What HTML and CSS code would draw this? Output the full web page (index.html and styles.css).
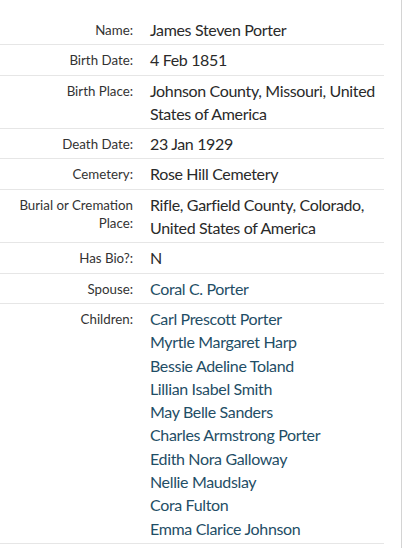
FILE: index.html
```html
<!DOCTYPE html>
<html>
<head>
<meta charset="utf-8">
<link rel="stylesheet" href="styles.css">
</head>
<body>
<div class="page">
  <dl class="facts">
    <div class="row"><dt>Name:</dt><dd>James Steven Porter</dd></div>
    <div class="row"><dt>Birth Date:</dt><dd>4 Feb 1851</dd></div>
    <div class="row"><dt>Birth Place:</dt><dd>Johnson County, Missouri, United States of America</dd></div>
    <div class="row"><dt>Death Date:</dt><dd>23 Jan 1929</dd></div>
    <div class="row"><dt>Cemetery:</dt><dd>Rose Hill Cemetery</dd></div>
    <div class="row"><dt>Burial or Cremation Place:</dt><dd>Rifle, Garfield County, Colorado, United States of America</dd></div>
    <div class="row"><dt>Has Bio?:</dt><dd>N</dd></div>
    <div class="row"><dt>Spouse:</dt><dd><a href="#">Coral C. Porter</a></dd></div>
    <div class="row"><dt>Children:</dt><dd class="list">
      <a href="#">Carl Prescott Porter</a>
      <a href="#">Myrtle Margaret Harp</a>
      <a href="#">Bessie Adeline Toland</a>
      <a href="#">Lillian Isabel Smith</a>
      <a href="#">May Belle Sanders</a>
      <a href="#">Charles Armstrong Porter</a>
      <a href="#">Edith Nora Galloway</a>
      <a href="#">Nellie Maudslay</a>
      <a href="#">Cora Fulton</a>
      <a href="#">Emma Clarice Johnson</a>
    </dd></div>
  </dl>
</div>
</body>
</html>
```
FILE: styles.css
```css
html, body {
  margin: 0;
  padding: 0;
  background: #fff;
}
.page {
  width: 401px;
  min-height: 548px;
  border-right: 1px solid #d4d4d4;
  box-sizing: content-box;
  padding-top: 15px;
}
.facts {
  margin: 0;
  width: 384px;
  font-family: Lato, "Liberation Sans", sans-serif;
}
.row {
  display: grid;
  grid-template-columns: 141px 1fr;
  border-bottom: 1px solid #e6e6e6;
  padding: 3px 0 3px;
}
dt {
  text-align: right;
  padding-right: 8px;
  font-size: 13.3px;
  color: #333;
  line-height: 18px;
  padding-top: 3px;
}
dd {
  margin: 0;
  padding-left: 9px;
  font-size: 16px;
  letter-spacing: -0.35px;
  line-height: 23.3px;
  color: #2a2a2a;
}
dd a {
  color: #1f4e66;
  text-decoration: none;
}
dd.list {
  display: flex;
  flex-direction: column;
}
```
